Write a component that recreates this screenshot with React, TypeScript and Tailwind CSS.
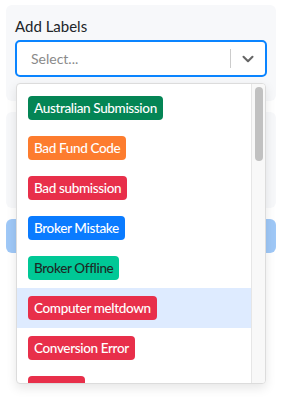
import { ChevronDown } from 'lucide-react';

const labels = [
  { name: 'Australian Submission', bg: 'bg-[#048555]', text: 'text-white' },
  { name: 'Bad Fund Code', bg: 'bg-[#fd7c2e]', text: 'text-white' },
  { name: 'Bad submission', bg: 'bg-[#e82f4a]', text: 'text-white' },
  { name: 'Broker Mistake', bg: 'bg-[#0a7bff]', text: 'text-white' },
  { name: 'Broker Offline', bg: 'bg-[#00c896]', text: 'text-[#1d2a26]' },
  { name: 'Computer meltdown', bg: 'bg-[#e82f4a]', text: 'text-white' },
  { name: 'Conversion Error', bg: 'bg-[#e82f4a]', text: 'text-white' },
  { name: 'Deleted', bg: 'bg-[#e82f4a]', text: 'text-white' },
];

export default function App() {
  return (
    <div className="w-[292px] h-[408px] bg-white relative font-['Lato','Noto_Sans',sans-serif] text-[#212529]">
      <div className="w-[270px] ml-[6px] flex flex-col gap-[11px] pt-[5px]">
        <div className="h-[96px] rounded-[6px] bg-[#f7f8fa] px-[9px] pt-[11px]">
          <p className="text-[15px] leading-[20px]">Add Labels</p>
          <div className="mt-[4px] h-[37px] rounded-[5px] border-2 border-[#0a84ff] bg-white flex items-center">
            <span className="flex-1 pl-[14px] text-[14px] text-[#8a8a8a]">Select...</span>
            <span className="w-px h-[19px] bg-[#cccccc]" />
            <span className="w-[34px] flex justify-center text-[#666]">
              <ChevronDown size={18} strokeWidth={2.75} />
            </span>
          </div>
        </div>
        <div className="h-[96px] rounded-[6px] bg-[#f7f8fa]" />
        <div className="h-[34px] rounded-[6px] bg-[#9fc8f7]" />
      </div>

      <div className="absolute left-[16px] top-[83px] w-[250px] h-[301px] bg-white rounded-[4px] border border-[#dcdcdc] shadow-[0_4px_11px_rgba(0,0,0,0.1)] overflow-hidden flex">
        <div className="flex-1 pt-[4px] overflow-hidden">
          {labels.map((l, i) => (
            <div key={l.name} className={`h-[40px] flex items-center pl-[11px] ${i === 5 ? 'bg-[#deebff]' : ''}`}>
              <span className={`h-[24px] px-[6px] rounded-[4px] flex items-center text-[13.5px] font-medium tracking-[-0.35px] ${l.bg} ${l.text}`}>
                {l.name}
              </span>
            </div>
          ))}
        </div>
        <div className="w-[14px] bg-[#f8f8f8] border-l border-[#e6e6e6] flex justify-center pt-[3px]">
          <div className="w-[8px] h-[74px] rounded-full bg-[#c1c1c1]" />
        </div>
      </div>
    </div>
  );
}
